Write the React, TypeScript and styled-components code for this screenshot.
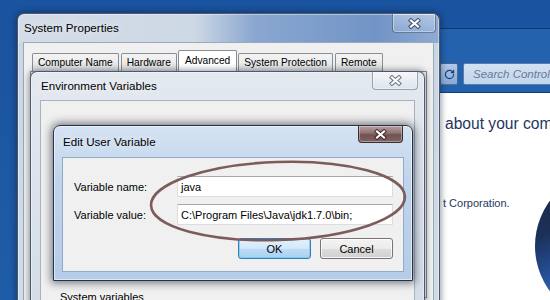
import styled, { createGlobalStyle } from 'styled-components';
import { RotateCw } from 'lucide-react';

type Glass = 'sys' | 'env' | 'edit';

const glassBg: Record<Glass, string> = {
  sys: 'linear-gradient(90deg, #d3dce7 0%, #cdd8e5 42%, #8aa7d0 56%, #7194c6 85%, #8eabd3 100%) top / 100% 29px no-repeat, linear-gradient(180deg, #c9d5e3, #d2dce8)',
  env: 'linear-gradient(180deg, #e4e9f0 0%, #d9e1eb 60%, #d3dce8 100%)',
  edit: 'linear-gradient(180deg, #d5e3f3 0%, #bfd4ec 35%, #b5cce8 100%)',
};

const GlobalStyle = createGlobalStyle`
  html, body {
    margin: 0;
    padding: 0;
    background: #1f5ba7;
  }
  body {
    font-family: "Liberation Sans", Arial, sans-serif;
  }
`;

const Desktop = styled.div`
  position: relative;
  width: 550px;
  height: 300px;
  overflow: hidden;
  background: linear-gradient(180deg, #1a539f 0%, #1f5ca8 100%);
  font-family: "Liberation Sans", Arial, sans-serif;
  font-size: 11px;
  color: #000;
`;

interface WinProps {
  $x: number;
  $y: number;
  $w: number;
  $h: number;
  $z: number;
  $pad: number;
  $glass: Glass;
}

// windows sit on the desktop at their own coordinates
const Win = styled.div<WinProps>`
  position: absolute;
  left: ${p => p.$x}px;
  top: ${p => p.$y}px;
  width: ${p => p.$w}px;
  height: ${p => p.$h}px;
  z-index: ${p => p.$z};
  box-sizing: border-box;
  display: flex;
  flex-direction: column;
  padding: 0 ${p => p.$pad}px ${p => p.$pad}px;
  border: 1px solid ${p => (p.$glass === 'edit' ? '#253247' : 'rgba(34, 46, 66, 0.75)')};
  border-radius: 7px 7px 0 0;
  background: ${p => glassBg[p.$glass]};
  box-shadow: ${p =>
    p.$glass === 'edit'
      ? '0 0 9px 2px rgba(12, 20, 38, 0.55), inset 0 0 0 1px rgba(255,255,255,0.55)'
      : '0 0 6px 1px rgba(10, 20, 40, 0.45), inset 0 0 0 1px rgba(255,255,255,0.4)'};
`;

const TitleBar = styled.div<{ $h: number }>`
  height: ${p => p.$h}px;
  flex: none;
  display: flex;
  align-items: center;
`;

const TitleText = styled.div`
  padding-left: 1px;
  font-size: 11.6px;
  line-height: 14px;
  color: #000;
  white-space: nowrap;
  text-shadow: 0 0 8px rgba(255, 255, 255, 0.9);
`;

type CloseKind = 'glass' | 'light' | 'red';

const closeBg: Record<CloseKind, string> = {
  glass: 'linear-gradient(180deg, rgba(255,255,255,0.35), rgba(190,210,235,0.25))',
  light: 'linear-gradient(180deg, #f4f6f9, #dfe5ed)',
  red: 'linear-gradient(180deg, #b89f9f 0%, #8d7171 45%, #6f5252 55%, #806262 100%)',
};

const closeBorder: Record<CloseKind, string> = {
  glass: 'rgba(40, 52, 75, 0.5)',
  light: '#9aa2ae',
  red: '#3e2c2c',
};

const CloseButton = styled.div<{ $kind: CloseKind; $w: number; $h: number; $edge: number }>`
  align-self: flex-start;
  margin-left: auto;
  margin-right: ${p => p.$edge}px;
  width: ${p => p.$w}px;
  height: ${p => p.$h}px;
  box-sizing: border-box;
  display: flex;
  align-items: center;
  justify-content: center;
  border: 1px solid ${p => closeBorder[p.$kind]};
  border-top: none;
  border-radius: 0 0 4px 4px;
  background: ${p => closeBg[p.$kind]};
  box-shadow: inset 0 0 0 1px rgba(255, 255, 255, 0.35);
`;

const Client = styled.div<{ $edge: string }>`
  flex: 1;
  min-height: 0;
  display: flex;
  flex-direction: column;
  background: #f0f0f0;
  border: 1px solid ${p => p.$edge};
  overflow: hidden;
`;

const TabStrip = styled.div`
  display: flex;
  align-items: flex-end;
  gap: 2px;
  height: 21px;
  margin-top: 7px;
  padding-left: 8px;
`;

const Tab = styled.div<{ $selected?: boolean }>`
  position: relative;
  z-index: ${p => (p.$selected ? 1 : 0)};
  box-sizing: border-box;
  height: ${p => (p.$selected ? 22 : 18)}px;
  margin: 0 ${p => (p.$selected ? -1 : 0)}px ${p => (p.$selected ? -1 : 0)}px;
  padding: 0 ${p => (p.$selected ? 6 : 5)}px ${p => (p.$selected ? 2 : 0)}px;
  display: flex;
  align-items: center;
  font-size: 10.2px;
  white-space: nowrap;
  border: 1px solid #8b8d95;
  border-bottom: none;
  border-radius: 2px 2px 0 0;
  background: ${p => (p.$selected ? '#fff' : 'linear-gradient(180deg, #f4f4f4 0%, #ebebeb 50%, #dedede 100%)')};
`;

const TabPanel = styled.div`
  flex: 1;
  margin: 0 6px 8px;
  background: #fff;
  border: 1px solid #8b8d95;
`;

const SectionLabel = styled.div`
  margin: 189px 0 0 19px;
  font-size: 11px;
  line-height: 14px;
`;

const Form = styled.div`
  display: flex;
  flex-direction: column;
  gap: 7px;
  padding: 18px 10px 0 11px;
`;

const FieldRow = styled.div`
  display: flex;
  align-items: center;
`;

const Label = styled.div`
  width: 103px;
  flex: none;
  font-size: 11px;
`;

const Field = styled.div`
  flex: 1;
  height: 21px;
  box-sizing: border-box;
  display: flex;
  align-items: center;
  padding-left: 3px;
  background: #fff;
  border: 1px solid #dcdde3;
  border-top-color: #a5a7ae;
  font-size: 11px;
  white-space: nowrap;
  overflow: hidden;
`;

const ButtonRow = styled.div`
  display: flex;
  justify-content: flex-end;
  gap: 9px;
  margin-top: 6px;
`;

const Button = styled.div<{ $default?: boolean }>`
  width: 73px;
  height: 21px;
  box-sizing: border-box;
  display: flex;
  align-items: center;
  justify-content: center;
  font-size: 11px;
  border-radius: 3px;
  border: 1px solid ${p => (p.$default ? '#3c7db0' : '#7d7272')};
  background: ${p =>
    p.$default
      ? 'linear-gradient(180deg, #e3f1fc 0%, #d2e8fa 50%, #bcdcf5 51%, #a9d1f1 100%)'
      : 'linear-gradient(180deg, #f3f3f3 0%, #ebebeb 50%, #dddddd 51%, #d0d0d0 100%)'};
  box-shadow: inset 0 0 0 1px ${p => (p.$default ? 'rgba(120, 200, 250, 0.8)' : 'rgba(255,255,255,0.8)')};
`;

const Marker = styled.svg`
  position: absolute;
  left: 0;
  top: 0;
  z-index: 10;
  pointer-events: none;
`;

/* control panel window behind */

const PanelWin = styled.div`
  position: absolute;
  left: 425px;
  top: 28px;
  width: 270px;
  height: 272px;
  z-index: 0;
  display: flex;
  flex-direction: column;
  background: linear-gradient(180deg, #2462ae 0%, #2060ab 100%);
  border-top: 1px solid #0f386f;
`;

const NavBar = styled.div`
  height: 63px;
  flex: none;
  box-sizing: border-box;
  display: flex;
  align-items: flex-start;
  gap: 5px;
  padding: 34px 0 0 15px;
`;

const NavButton = styled.div`
  width: 18px;
  height: 22px;
  box-sizing: border-box;
  display: flex;
  align-items: center;
  justify-content: center;
  border: 1px solid rgba(18, 40, 80, 0.55);
  border-radius: 2px;
  background: linear-gradient(180deg, rgba(225, 235, 248, 0.75), rgba(180, 202, 232, 0.7));
  color: #1b3f7e;
`;

const SearchBox = styled.div`
  width: 150px;
  height: 22px;
  box-sizing: border-box;
  display: flex;
  align-items: center;
  padding-left: 9px;
  border: 1px solid #5a7cad;
  border-radius: 2px;
  background: linear-gradient(180deg, #d3e1f2, #c2d5ec);
  font-size: 11.5px;
  font-style: italic;
  color: #6c7897;
  white-space: nowrap;
`;

const PanelBody = styled.div`
  flex: 1;
  display: flex;
  flex-direction: column;
  background: #fff;
  border-top: 1px solid #163e76;
  padding-left: 17px;
  overflow: hidden;
`;

const Heading = styled.div`
  margin: 21px 0 0 3px;
  font-size: 15.6px;
  line-height: 20px;
  color: #1e3560;
  white-space: nowrap;
`;

const Divider = styled.div`
  height: 1px;
  margin-top: 23px;
  background: #d6d6d6;
`;

const InfoRow = styled.div`
  display: flex;
  margin-top: 13px;
`;

const InfoText = styled.div`
  width: 92px;
  flex: none;
  padding: 25px 0 0 1px;
  font-size: 11px;
  line-height: 16px;
  color: #1e395e;
  white-space: nowrap;
`;

function CloseGlyph({ dark }: { dark: string }) {
  return (
    <svg width="13" height="11" viewBox="0 0 13 11">
      <path d="M3 2.5 L10 8.5 M10 2.5 L3 8.5" stroke={dark} strokeWidth="4.2" strokeLinecap="square" />
      <path d="M3 2.5 L10 8.5 M10 2.5 L3 8.5" stroke="#fff" strokeWidth="2.2" strokeLinecap="square" />
    </svg>
  );
}

function Globe() {
  return (
    <svg width="152" height="152" viewBox="0 0 152 152">
      <defs>
        <radialGradient id="globe" cx="18%" cy="82%" r="70%">
          <stop offset="0" stopColor="#3469b8" />
          <stop offset="0.3" stopColor="#23498c" />
          <stop offset="0.6" stopColor="#1b3058" />
          <stop offset="1" stopColor="#182a4a" />
        </radialGradient>
      </defs>
      <circle cx="76" cy="76" r="76" fill="url(#globe)" />
    </svg>
  );
}

export default function App() {
  return (
    <Desktop>
      <GlobalStyle />

      <PanelWin>
        <NavBar>
          <NavButton>
            <RotateCw size={11} strokeWidth={2.6} />
          </NavButton>
          <SearchBox>Search Control Panel</SearchBox>
        </NavBar>
        <PanelBody>
          <Heading>about your computer</Heading>
          <Divider />
          <InfoRow>
            <InfoText>t Corporation.</InfoText>
            <Globe />
          </InfoRow>
        </PanelBody>
      </PanelWin>

      <Win $x={17} $y={13} $w={423} $h={300} $z={1} $pad={5} $glass="sys">
        <TitleBar $h={28}>
          <TitleText>System Properties</TitleText>
          <CloseButton $kind="glass" $w={44} $h={19} $edge={-2}>
            <CloseGlyph dark="rgba(30, 40, 60, 0.7)" />
          </CloseButton>
        </TitleBar>
        <Client $edge="#9aa8ba">
          <TabStrip>
            <Tab>Computer Name</Tab>
            <Tab>Hardware</Tab>
            <Tab $selected>Advanced</Tab>
            <Tab>System Protection</Tab>
            <Tab>Remote</Tab>
          </TabStrip>
          <TabPanel />
        </Client>
      </Win>

      <Win $x={30} $y={71} $w={395} $h={250} $z={2} $pad={9} $glass="env">
        <TitleBar $h={28}>
          <TitleText>Environment Variables</TitleText>
          <CloseButton $kind="light" $w={46} $h={18} $edge={-3}>
            <CloseGlyph dark="rgba(70, 78, 92, 0.75)" />
          </CloseButton>
        </TitleBar>
        <Client $edge="#a7b2c0">
          <SectionLabel>System variables</SectionLabel>
        </Client>
      </Win>

      <Win $x={53} $y={125} $w={360} $h={156} $z={3} $pad={8} $glass="edit">
        <TitleBar $h={31}>
          <TitleText>Edit User Variable</TitleText>
          <CloseButton $kind="red" $w={45} $h={17} $edge={1}>
            <CloseGlyph dark="rgba(50, 25, 25, 0.8)" />
          </CloseButton>
        </TitleBar>
        <Client $edge="#93a9c4">
          <Form>
            <FieldRow>
              <Label>Variable name:</Label>
              <Field>java</Field>
            </FieldRow>
            <FieldRow>
              <Label>Variable value:</Label>
              <Field>C:\Program Files\Java\jdk1.7.0\bin;</Field>
            </FieldRow>
            <ButtonRow>
              <Button $default>OK</Button>
              <Button>Cancel</Button>
            </ButtonRow>
          </Form>
        </Client>
      </Win>

      <Marker width="550" height="300" viewBox="0 0 550 300">
        <ellipse
          cx="278"
          cy="201"
          rx="127"
          ry="39"
          transform="rotate(-2 278 201)"
          fill="none"
          stroke="#7c5c5a"
          strokeWidth="2.6"
        />
      </Marker>
    </Desktop>
  );
}
